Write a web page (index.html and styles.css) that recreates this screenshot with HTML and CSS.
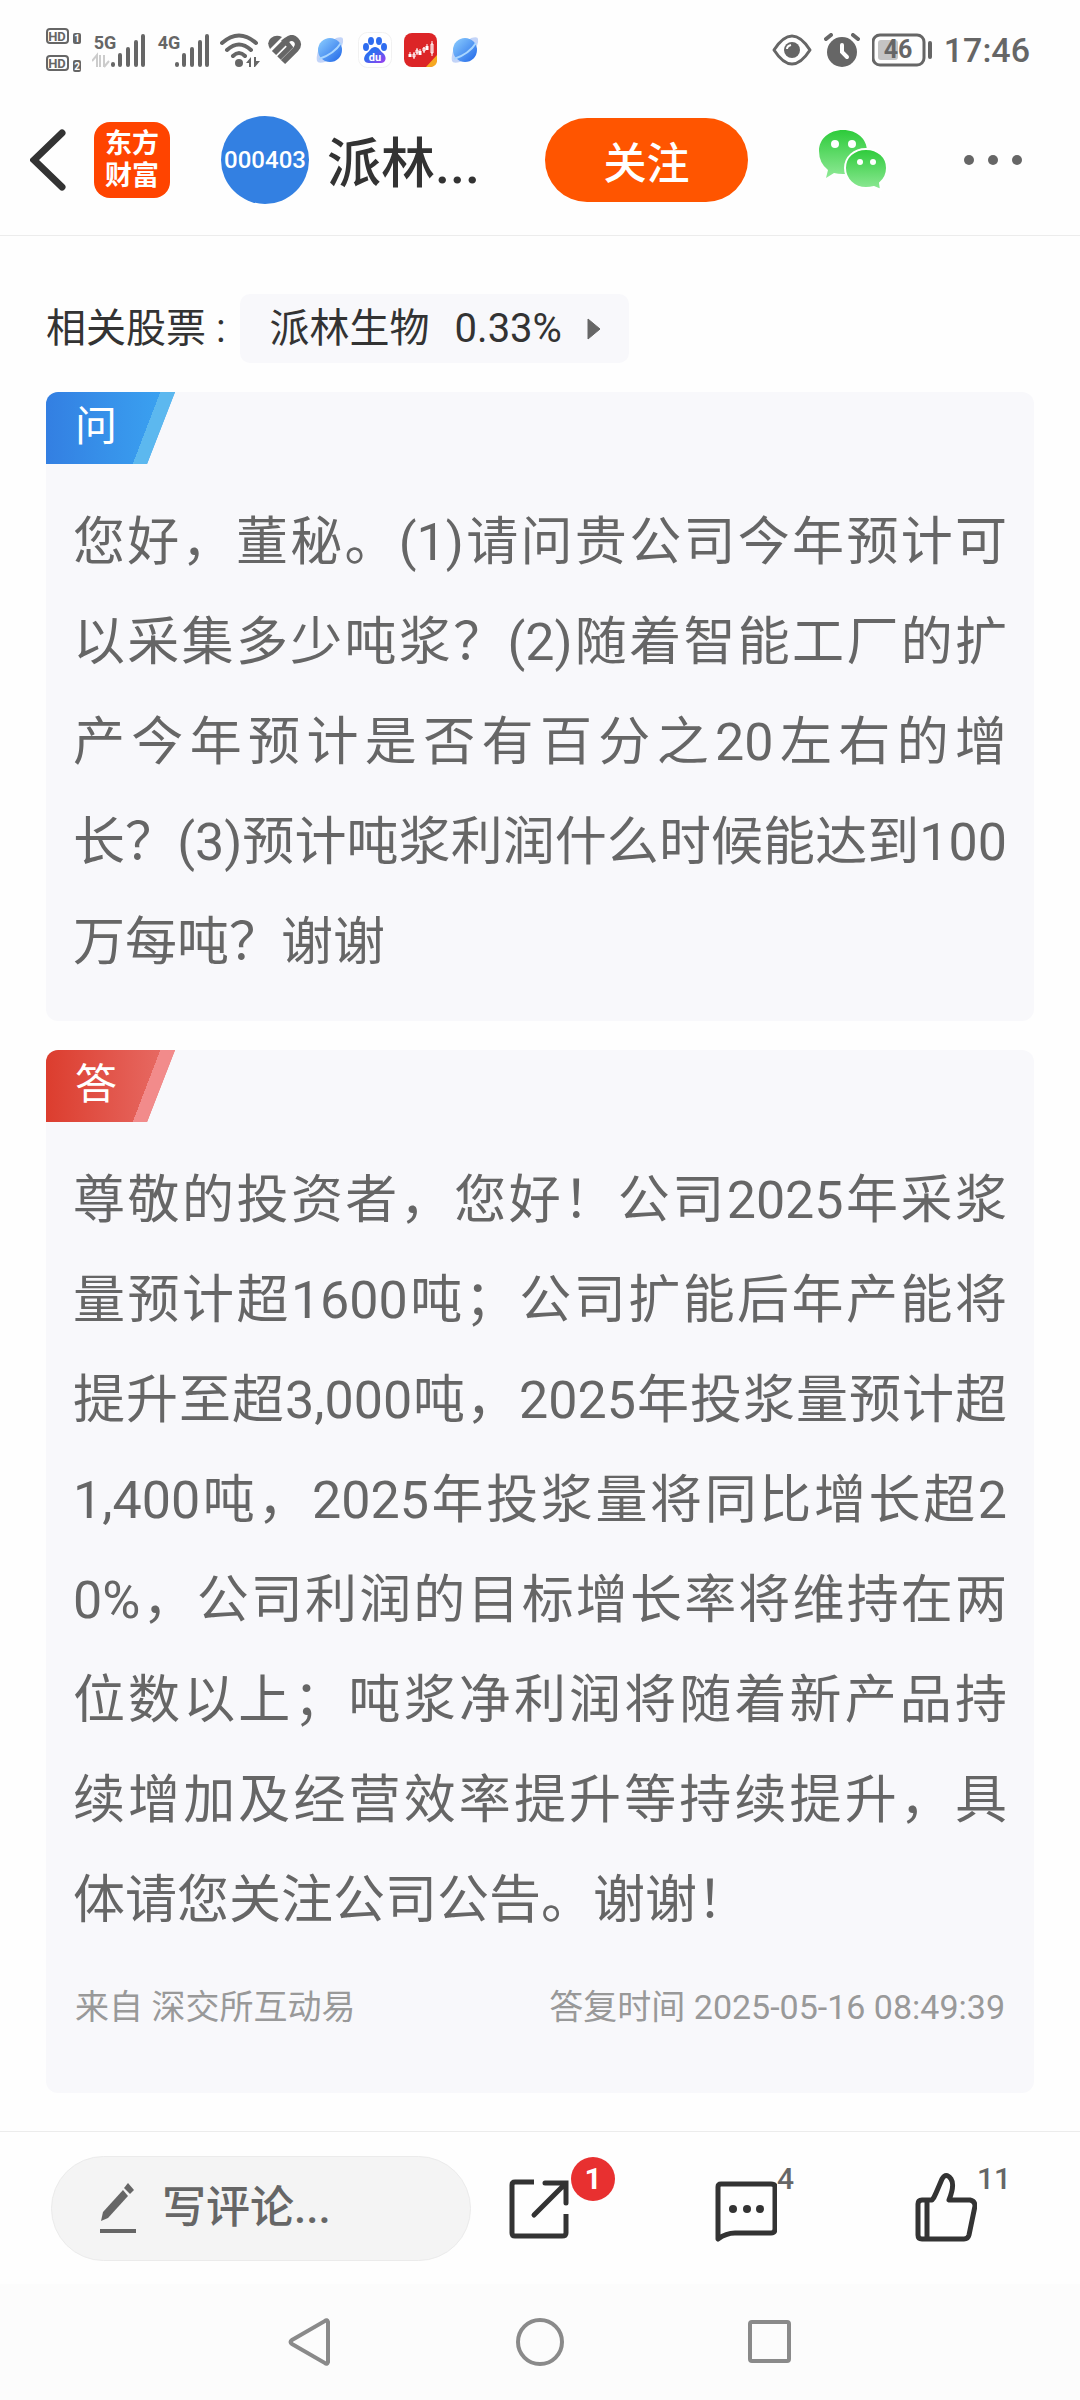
FILE: index.html
```html
<!DOCTYPE html>
<html lang="zh-CN">
<head>
    <meta charset="UTF-8">
    <meta name="viewport" content="width=device-width, initial-scale=1.0">
    <title>派林生物 - 问董秘</title>
    <link rel="stylesheet" href="styles.css">
</head>
<body>
    <svg class="defs" width="0" height="0" aria-hidden="true">
        <defs>
            <linearGradient id="planetFill" x1="0" y1="0" x2="1" y2="1">
                <stop offset="0" stop-color="#8fd0ff"/>
                <stop offset="1" stop-color="#1f66e8"/>
            </linearGradient>
            <linearGradient id="pawFill" x1="0" y1="0" x2="1" y2="1">
                <stop offset="0.4" stop-color="#2f6df0"/>
                <stop offset="1" stop-color="#a03cf0"/>
            </linearGradient>
            <linearGradient id="wechatFill" x1="0" y1="0" x2="0" y2="1">
                <stop offset="0" stop-color="#2dcb3a"/>
                <stop offset="1" stop-color="#8fe996"/>
            </linearGradient>
            <symbol id="planet" viewBox="0 0 28 28">
                <path d="M20 2Q27 0 27 3Q28 9 22 15L14 8ZM2 15Q0 22 1 25Q2 28 9 26L14 20Z" fill="#c3d4f8"/>
                <circle cx="14" cy="14" r="12" fill="url(#planetFill)"/>
                <path d="M3 23Q18 18 25 7" fill="none" stroke="#a9d6ff" stroke-width="2"/>
            </symbol>
        </defs>
    </svg>

    <div class="statusbar">
        <svg class="hd" width="36" height="44" viewBox="0 0 36 44">
            <rect x="1" y="1" width="21" height="14" rx="3" fill="none" stroke="#666" stroke-width="2"/>
            <text x="11" y="13" font-size="13">HD</text>
            <rect x="27" y="5" width="8" height="11" rx="2" fill="#666"/>
            <text class="sim" x="31" y="14" font-size="10">1</text>
            <rect x="1" y="28" width="21" height="14" rx="3" fill="none" stroke="#666" stroke-width="2"/>
            <text x="11" y="40" font-size="13">HD</text>
            <rect x="27" y="32" width="8" height="12" rx="2" fill="#666"/>
            <text class="sim" x="31" y="42" font-size="10">2</text>
        </svg>
        <svg class="signal" width="54" height="36" viewBox="0 0 54 36">
            <text x="13" y="17" font-size="18">5G</text>
            <path d="M0 29L5 23V35M8 23V35M12 23V35M12 35L17 29" fill="none" stroke="#ccc" stroke-width="2"/>
            <path d="M21 32V33M28 23V33M36 17V33M44 10V33M51 4V33" stroke="#666" stroke-width="4" stroke-linecap="round"/>
        </svg>
        <svg class="signal" width="54" height="36" viewBox="0 0 54 36">
            <text x="13" y="17" font-size="18">4G</text>
            <path d="M21 32V33M28 23V33M36 17V33M44 10V33M51 4V33" stroke="#666" stroke-width="4" stroke-linecap="round"/>
        </svg>
        <svg class="wifi" width="40" height="36" viewBox="0 0 40 36">
            <path d="M2 11Q19 -4 36 11M7 18Q19 7 31 18M13 24Q19 18 25 24" fill="none" stroke="#666" stroke-width="4" stroke-linecap="round"/>
            <circle cx="19" cy="31" r="4" fill="#666"/>
            <path d="M26 31L31 25V35H29V31ZM34 25H36V29H40L35 35H34Z" fill="#666"/>
        </svg>
        <svg class="heart" width="34" height="30" viewBox="0 0 34 30">
            <path d="M2 14Q-2 7 3 3Q8 -1 14 2Z" fill="#666"/>
            <g fill="none" stroke="#666" stroke-width="6">
                <path d="M6 18L17 7"/>
                <path d="M15 8L19 5Q24 1 28 5Q32 9 28 14L15 27"/>
                <path d="M11 23L22 12L18 7" stroke-width="5"/>
            </g>
        </svg>
        <svg class="app" width="28" height="28"><use href="#planet"/></svg>
        <svg class="baidu" width="34" height="36" viewBox="0 0 34 36">
            <rect x="0.5" y="0.5" width="33" height="35" rx="9" fill="#fff" stroke="#f1f1f1"/>
            <ellipse cx="8" cy="15" rx="3" ry="4" fill="#2f6df0"/>
            <ellipse cx="13" cy="9" rx="3" ry="4" fill="#2f6df0"/>
            <ellipse cx="21" cy="9" rx="3" ry="4" fill="#2f6df0"/>
            <ellipse cx="26" cy="15" rx="3" ry="4" fill="#2f6df0"/>
            <path d="M17 15C21 15 22 19 25 21C30 26 27 31 23 31H11C6 31 4 26 9 21C12 19 13 15 17 15Z" fill="url(#pawFill)"/>
            <text class="sim" x="17" y="29" font-size="11">du</text>
        </svg>
        <svg class="stock" width="33" height="34" viewBox="0 0 33 34">
            <rect width="33" height="34" rx="8" fill="#dc2527"/>
            <g stroke="#fff" fill="none">
                <path d="M6 21V24M16 18V22M23 13V17" stroke-width="3"/>
                <path d="M6 19V21M10 19V26M13 15V22M16 16V18M20 14V20M23 11V13M28 8V23"/>
                <path d="M9 21H11V24H9ZM12 17H14V20H12ZM19 15H21V18H19ZM27 11H29V20H27Z"/>
            </g>
            <path d="M22 34L33 22V27Q33 34 26 34Z" fill="#f6a821"/>
        </svg>
        <svg class="app" width="28" height="28"><use href="#planet"/></svg>

        <svg class="eye" width="40" height="32" viewBox="0 0 40 32">
            <path d="M2 16Q20 -12 38 16Q20 44 2 16Z" fill="none" stroke="#666" stroke-width="3" stroke-linejoin="round"/>
            <circle cx="20" cy="16" r="8" fill="#666"/>
            <path d="M15 15Q15 12 19 11" fill="none" stroke="#fff" stroke-width="2"/>
        </svg>
        <svg class="alarm" width="36" height="34" viewBox="0 0 36 34">
            <circle cx="18" cy="19" r="15" fill="#666"/>
            <path d="M2 6L7 2M29 2L34 6" stroke="#666" stroke-width="4" stroke-linecap="round"/>
            <path d="M18 12V19L23 24" fill="none" stroke="#fff" stroke-width="4" stroke-linecap="round"/>
        </svg>
        <svg class="battery" width="60" height="34" viewBox="0 0 60 34">
            <rect x="1" y="2" width="51" height="30" rx="7" fill="none" stroke="#666" stroke-width="3"/>
            <rect x="6" y="7" width="20" height="20" rx="3" fill="#c4c4c4"/>
            <text x="26" y="25" font-size="25">46</text>
            <path d="M58 10V24" stroke="#666" stroke-width="4" stroke-linecap="round"/>
        </svg>
        <span class="time">17:46</span>
    </div>

    <header class="header">
        <button class="icon-btn back" aria-label="返回">
            <svg width="36" height="62" viewBox="0 0 36 62">
                <path d="M32 4L4 31L32 58" fill="none" stroke="#333" stroke-width="7" stroke-linecap="round"/>
            </svg>
        </button>
        <a class="logo" href="#">东方<br>财富</a>
        <div class="avatar">000403</div>
        <h1 class="title">派林...</h1>
        <button class="follow">关注</button>
        <button class="icon-btn wechat" aria-label="分享到微信">
            <svg width="70" height="62" viewBox="0 0 70 62">
                <path d="M25 1C39 1 49 10 49 22C49 35 39 45 25 45Q20 45 16 44L8 49L10 41Q1 34 1 22C1 10 11 1 25 1Z" fill="url(#wechatFill)"/>
                <path d="M48 20C60 20 69 28 69 39Q69 48 62 54L63 61L56 58Q52 59 48 59C36 59 27 50 27 39C27 28 36 20 48 20Z" fill="url(#wechatFill)" stroke="#fff" stroke-width="2"/>
                <circle cx="17" cy="15" r="4" fill="#fff"/>
                <circle cx="34" cy="15" r="4" fill="#fff"/>
                <circle cx="42" cy="33" r="3" fill="#fff"/>
                <circle cx="55" cy="33" r="3" fill="#fff"/>
            </svg>
        </button>
        <button class="icon-btn more" aria-label="更多">
            <svg width="58" height="12" viewBox="0 0 58 12">
                <g fill="#666">
                    <circle cx="5" cy="6" r="5"/>
                    <circle cx="29" cy="6" r="5"/>
                    <circle cx="53" cy="6" r="5"/>
                </g>
            </svg>
        </button>
    </header>

    <main class="content">
        <div class="related">
            <span>相关股票 :</span>
            <a class="chip" href="#">
                <span>派林生物</span>
                <span class="change">0.33%</span>
                <svg width="14" height="22" viewBox="0 0 14 22"><path d="M1 1L13 11L1 21Z" fill="#666" stroke="#666" stroke-linejoin="round"/></svg>
            </a>
        </div>

        <section class="card question">
            <h2 class="tag"><span>问</span></h2>
            <p>您好，董秘。(1)请问贵公司今年预计可以采集多少吨浆？(2)随着智能工厂的扩产今年预计是否有百分之20左右的增长？(3)预计吨浆利润什么时候能达到100万每吨？谢谢</p>
        </section>

        <section class="card answer">
            <h2 class="tag"><span>答</span></h2>
            <p>尊敬的投资者，您好！公司2025年采浆量预计超1600吨；公司扩能后年产能将提升至超3,000吨，2025年投浆量预计超1,400吨，2025年投浆量将同比增长超20%，公司利润的目标增长率将维持在两位数以上；吨浆净利润将随着新产品持续增加及经营效率提升等持续提升，具体请您关注公司公告。谢谢！</p>
            <div class="meta">
                <span>来自 深交所互动易</span>
                <span>答复时间 2025-05-16 08:49:39</span>
            </div>
        </section>
    </main>

    <footer class="toolbar">
        <label class="comment-box">
            <svg width="36" height="50" viewBox="0 0 36 50">
                <path d="M1 38L3 29L23 7L28 13L8 35Z" fill="#666"/>
                <path d="M24 5L28 0L34 7L30 11Z" fill="#666"/>
                <path d="M0 48H36" stroke="#666" stroke-width="4"/>
            </svg>
            <input type="text" placeholder="写评论..." aria-label="写评论">
        </label>
        <div class="actions">
            <button class="icon-btn" aria-label="分享">
                <svg width="62" height="70" viewBox="0 0 62 70">
                    <g fill="none" stroke="#333" stroke-width="5">
                        <path d="M25 9H6Q3 9 3 12V60Q3 63 6 63H53Q57 63 57 60V41"/>
                        <path d="M36 10H57V30M56 11L25 42" stroke-linecap="round"/>
                    </g>
                </svg>
                <span class="badge">1</span>
            </button>
            <button class="icon-btn" aria-label="评论">
                <svg width="68" height="70" viewBox="-6 0 68 70">
                    <path d="M3 66V14Q3 11 6 11H56Q60 11 60 14V56Q60 60 56 60H20Q11 60 3 66Z" fill="none" stroke="#333" stroke-width="5" stroke-linejoin="round"/>
                    <g fill="#333">
                        <circle cx="18" cy="36" r="4"/>
                        <circle cx="32" cy="36" r="4"/>
                        <circle cx="45" cy="36" r="4"/>
                    </g>
                </svg>
                <span class="count">4</span>
            </button>
            <button class="icon-btn" aria-label="点赞">
                <svg width="62" height="70" viewBox="0 0 62 70">
                    <path d="M12 27V66M7 27H17Q19 25 21 20L27 6Q31 -1 36 6Q40 12 34 27H55Q60 28 60 33L54 62Q53 66 49 66H7Q3 66 3 62V31Q3 27 7 27Z" fill="none" stroke="#333" stroke-width="5" stroke-linejoin="round"/>
                </svg>
                <span class="count">11</span>
            </button>
        </div>
    </footer>

    <nav class="sysnav">
        <button class="icon-btn" aria-label="后退">
            <svg width="48" height="48" viewBox="0 0 48 48"><path d="M42 4Q41 1 39 3L6 22Q3 24 6 26L39 45Q41 47 42 44Z" fill="none" stroke="#8a8a8a" stroke-width="4"/></svg>
        </button>
        <button class="icon-btn" aria-label="主页">
            <svg width="48" height="48" viewBox="0 0 48 48"><circle cx="24" cy="24" r="22" fill="none" stroke="#8a8a8a" stroke-width="4"/></svg>
        </button>
        <button class="icon-btn" aria-label="最近任务">
            <svg width="48" height="48" viewBox="0 0 48 48"><rect x="4" y="4" width="39" height="39" rx="2" fill="none" stroke="#8a8a8a" stroke-width="4"/></svg>
        </button>
    </nav>
</body>
</html>
```

FILE: styles.css
```css
* {
    box-sizing: border-box;
    margin: 0;
    padding: 0;
}
body {
    display: flex;
    flex-direction: column;
    min-height: 100vh;
    background-color: #fefefe;
    color: #333;
    font-family: Roboto, "Noto Sans CJK SC", sans-serif;
    font-size: 40px;
}
button, input {
    font-family: inherit;
    border: none;
    background: none;
}
button {
    cursor: pointer;
}
a {
    color: inherit;
    text-decoration: none;
}
svg {
    display: block;
    flex-shrink: 0;
}
.defs {
    position: absolute;
}
.icon-btn {
    position: relative;
    flex-shrink: 0;
}

/* status bar */
.statusbar {
    display: flex;
    align-items: center;
    height: 100px;
    padding: 0 50px 0 46px;
    color: #666;
}
.statusbar text {
    fill: #666;
    font-weight: 700;
    text-anchor: middle;
}
.statusbar .sim {
    fill: #fff;
}
.signal, .wifi {
    margin-left: 10px;
}
.heart {
    margin-left: 8px;
}
.app, .baidu {
    margin-left: 14px;
}
.eye {
    margin-left: auto;
}
.stock, .alarm, .battery, .time {
    margin-left: 12px;
}
.time {
    font-size: 34px;
    font-weight: 500;
}

/* header */
.header {
    display: flex;
    align-items: center;
    height: 136px;
    padding: 0 58px 16px 30px;
    border-bottom: 1px solid #ececec;
}
.logo {
    display: flex;
    align-items: center;
    justify-content: center;
    width: 76px;
    height: 76px;
    margin-left: 28px;
    border-radius: 16px;
    background-color: #ff4400;
    color: #fff;
    font-size: 27px;
    font-weight: 700;
    line-height: 32px;
}
.avatar {
    display: flex;
    align-items: center;
    justify-content: center;
    width: 88px;
    height: 88px;
    margin-left: 51px;
    border-radius: 50%;
    background-color: #3380e2;
    color: #fff;
    font-size: 24px;
    font-weight: 500;
}
.title {
    flex: 1;
    margin-left: 18px;
    font-size: 54px;
    font-weight: 500;
    white-space: nowrap;
}
.follow {
    width: 203px;
    height: 84px;
    border-radius: 42px;
    background-color: #ff5500;
    color: #fff;
    font-size: 43px;
    font-weight: 500;
}
.wechat {
    margin-left: 70px;
}
.more {
    margin-left: 76px;
}

/* content */
.content {
    flex: 1;
    padding: 58px 46px 36px;
}
.related {
    display: flex;
    align-items: center;
    gap: 14px;
    line-height: 69px;
}
.chip {
    display: flex;
    align-items: center;
    padding: 0 28px 0 30px;
    border-radius: 10px;
    background-color: #f8f8fb;
}
.change {
    margin: 0 25px;
}
.card {
    margin-top: 29px;
    padding: 0 27px 28px;
    border-radius: 12px;
    background-color: #f8f8fb;
    overflow: hidden;
}
.card p {
    margin-top: 29px;
    color: #666;
    font-size: 52px;
    line-height: 100px;
    text-align: justify;
    word-break: break-all;
}
.tag {
    width: 129px;
    height: 72px;
    margin-left: -27px;
    padding-left: 29px;
    clip-path: polygon(0 0, 100% 0, 101px 100%, 0 100%);
    color: #fff;
    font-size: 42px;
    font-weight: 400;
    line-height: 70px;
}
.question .tag {
    background: linear-gradient(111deg, transparent 73%, #5cb8ef 73%), linear-gradient(90deg, #337fe2, #3ba5f2);
}
.answer .tag {
    background: linear-gradient(111deg, transparent 73%, #f28b8b 73%), linear-gradient(90deg, #dc3d2e, #e86e68);
}
.meta {
    display: flex;
    justify-content: space-between;
    padding: 26px 2px 28px;
    color: #999;
    font-size: 34px;
    line-height: 60px;
}

/* comment toolbar */
.toolbar {
    display: flex;
    align-items: center;
    height: 153px;
    padding: 0 103px 0 51px;
    border-top: 1px solid #ececec;
}
.comment-box {
    display: flex;
    align-items: center;
    gap: 26px;
    width: 420px;
    height: 105px;
    padding: 0 48px;
    border: 1px solid #ebebeb;
    border-radius: 53px;
    background-color: #f4f4f4;
}
.comment-box input {
    flex: 1;
    min-width: 0;
    font-size: 44px;
    font-weight: 500;
    outline: none;
}
.comment-box input::placeholder {
    color: #666;
    opacity: 1;
}
.actions {
    display: flex;
    flex: 1;
    justify-content: space-between;
    margin-left: 38px;
}
.badge, .count {
    position: absolute;
    left: 100%;
    font-size: 30px;
    font-weight: 500;
}
.badge {
    top: -16px;
    width: 44px;
    height: 44px;
    border-radius: 50%;
    background-color: #e83030;
    color: #fff;
    line-height: 44px;
    font-weight: 700;
}
.count {
    top: -10px;
    color: #666;
    line-height: 32px;
}

/* system navigation */
.sysnav {
    display: grid;
    grid-template-columns: repeat(3, 1fr);
    align-items: center;
    justify-items: center;
    height: 116px;
    padding: 0 18%;
    background-color: #fcfcfc;
}
```
